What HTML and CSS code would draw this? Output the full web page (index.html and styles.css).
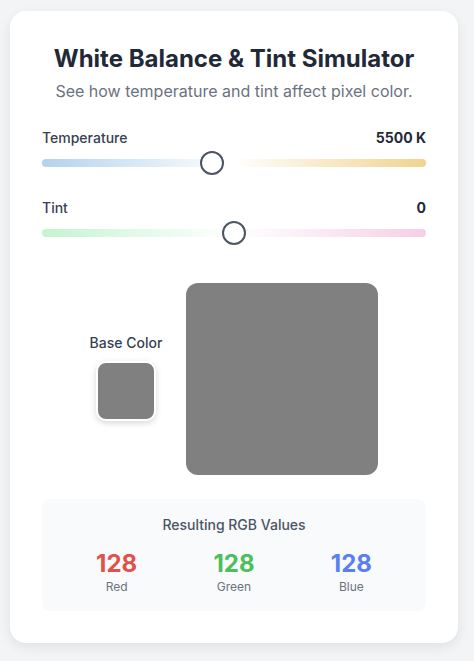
FILE: index.html
```html
<!DOCTYPE html>
<html lang="en">
<head>
    <meta charset="UTF-8">
    <meta name="viewport" content="width=device-width, initial-scale=1.0">
    <title>White Balance &amp; Tint Simulator</title>
    <link rel="stylesheet" href="styles.css">
</head>
<body>
    <div class="card">
        <h1>White Balance &amp; Tint Simulator</h1>
        <p class="subtitle">See how temperature and tint affect pixel color.</p>

        <div class="control">
            <div class="control-row">
                <label for="temp">Temperature</label>
                <span class="value" id="tempValue">5500 K</span>
            </div>
            <input type="range" id="temp" class="slider temp" min="2000" max="10000" step="100" value="5500">
        </div>
        <div class="control">
            <div class="control-row">
                <label for="tint">Tint</label>
                <span class="value" id="tintValue">0</span>
            </div>
            <input type="range" id="tint" class="slider tint" min="-100" max="100" value="0">
        </div>

        <div class="preview">
            <div class="base">
                <span class="base-label">Base Color</span>
                <div class="swatch" id="baseSwatch"></div>
            </div>
            <div class="result" id="resultSwatch"></div>
        </div>

        <div class="rgb-box">
            <div class="rgb-title">Resulting RGB Values</div>
            <div class="rgb-grid">
                <div class="rgb-item">
                    <span class="num red" id="rOut">128</span>
                    <span class="chan">Red</span>
                </div>
                <div class="rgb-item">
                    <span class="num green" id="gOut">128</span>
                    <span class="chan">Green</span>
                </div>
                <div class="rgb-item">
                    <span class="num blue" id="bOut">128</span>
                    <span class="chan">Blue</span>
                </div>
            </div>
        </div>
    </div>

    <script>
        const base = [128, 128, 128];
        const temp = document.getElementById("temp");
        const tint = document.getElementById("tint");

        function clamp(v) {
            return Math.max(0, Math.min(255, Math.round(v)));
        }

        function update() {
            const t = (parseInt(temp.value) - 5500) / 4500;
            const g = parseInt(tint.value) / 100;
            const r = clamp(base[0] * (1 + t * 0.3) * (1 + g * 0.1));
            const gr = clamp(base[1] * (1 - g * 0.2));
            const b = clamp(base[2] * (1 - t * 0.3) * (1 + g * 0.1));

            document.getElementById("tempValue").textContent = temp.value + " K";
            document.getElementById("tintValue").textContent = tint.value;
            document.getElementById("rOut").textContent = r;
            document.getElementById("gOut").textContent = gr;
            document.getElementById("bOut").textContent = b;
            document.getElementById("resultSwatch").style.background = `rgb(${r}, ${gr}, ${b})`;
        }

        temp.addEventListener("input", update);
        tint.addEventListener("input", update);
        update();
    </script>
</body>
</html>
```
FILE: styles.css
```css
body {
    margin: 0;
    padding: 11px 16px 19px 10px;
    background: #f3f4f6;
    font-family: Inter, 'Noto Sans', sans-serif;
    color: #1f2937;
}
.card {
    width: 448px;
    box-sizing: border-box;
    background: white;
    border-radius: 16px;
    padding: 32px;
    box-shadow: 0 4px 12px rgba(0, 0, 0, 0.08);
}
h1 {
    margin: 0;
    font-size: 24px;
    line-height: 32px;
    font-weight: 700;
    text-align: center;
    color: #1f2937;
}
.subtitle {
    margin: 4px 0 25px;
    font-size: 16px;
    line-height: 24px;
    text-align: center;
    color: #6b7280;
}
.control {
    margin-bottom: 23px;
}
.control-row {
    display: flex;
    justify-content: space-between;
    align-items: center;
    font-size: 14px;
    line-height: 20px;
    margin-bottom: 3px;
}
.control-row label {
    font-weight: 500;
    color: #374151;
}
.control-row .value {
    font-weight: 700;
    color: #1f2937;
}
.slider {
    -webkit-appearance: none;
    appearance: none;
    display: block;
    width: 100%;
    height: 24px;
    margin: 0;
    background: transparent;
    outline: none;
}
.slider::-webkit-slider-runnable-track {
    height: 8px;
    border-radius: 4px;
}
.slider.temp::-webkit-slider-runnable-track {
    background: linear-gradient(to right, #b2d3ec, #ffffff 50%, #f0d38d);
}
.slider.tint::-webkit-slider-runnable-track {
    background: linear-gradient(to right, #c6f3d2, #ffffff 50%, #f5cfe6);
}
.slider::-webkit-slider-thumb {
    -webkit-appearance: none;
    width: 24px;
    height: 24px;
    margin-top: -8px;
    border-radius: 50%;
    background: white;
    border: 2px solid #4b5563;
    box-sizing: border-box;
    cursor: pointer;
}
.preview {
    display: flex;
    justify-content: center;
    align-items: center;
    gap: 24px;
    margin: 38px 0 24px;
}
.base {
    display: flex;
    flex-direction: column;
    align-items: center;
    gap: 8px;
    margin-bottom: 5px;
}
.base-label {
    font-size: 14px;
    line-height: 20px;
    font-weight: 500;
    color: #374151;
}
.swatch {
    width: 56px;
    height: 56px;
    background: #808080;
    border: 2px solid white;
    border-radius: 10px;
    box-shadow: 0 2px 6px rgba(0, 0, 0, 0.16);
}
.result {
    width: 192px;
    height: 192px;
    background: #808080;
    border-radius: 12px;
}
.rgb-box {
    background: #f9fafb;
    border-radius: 8px;
    padding: 16px;
    text-align: center;
}
.rgb-title {
    font-size: 14px;
    line-height: 20px;
    font-weight: 500;
    color: #4b5563;
    margin-bottom: 14px;
}
.rgb-grid {
    display: grid;
    grid-template-columns: repeat(3, 1fr);
}
.rgb-item {
    display: flex;
    flex-direction: column;
    align-items: center;
}
.num {
    font-size: 24px;
    line-height: 30px;
    font-weight: 700;
}
.num.red { color: #e0514a; }
.num.green { color: #4cbf5c; }
.num.blue { color: #5a7ff2; }
.chan {
    font-size: 12px;
    line-height: 16px;
    color: #6b7280;
}
```
